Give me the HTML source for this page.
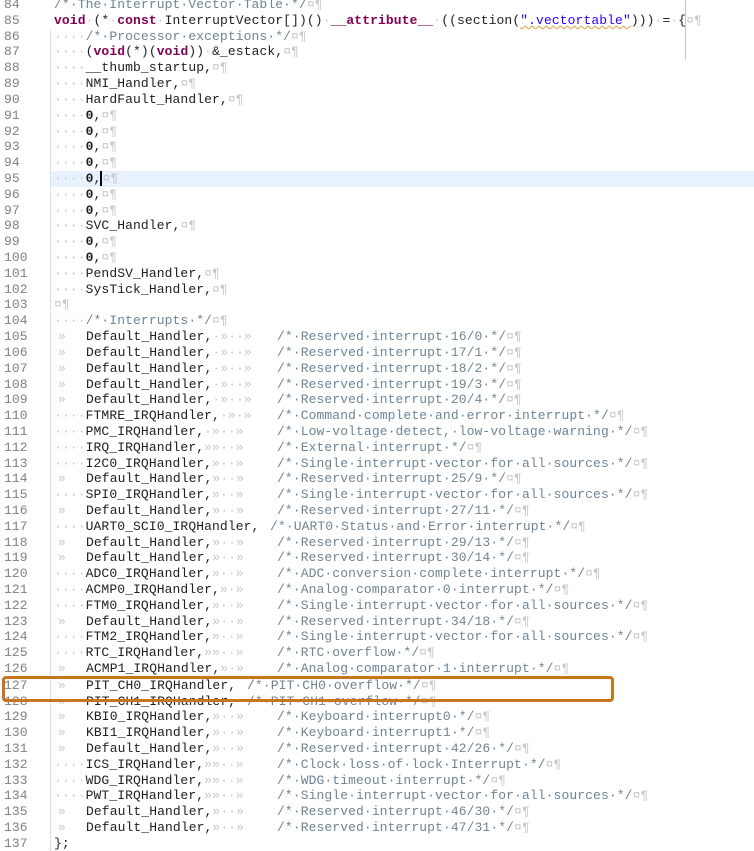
<!DOCTYPE html>
<html><head><meta charset="utf-8"><style>
html,body{margin:0;padding:0;background:#fff;width:754px;height:851px;overflow:hidden;position:relative}
.l{position:absolute;left:0;width:754px;height:16px;line-height:16px;font-family:"Liberation Mono",monospace;font-size:13px;letter-spacing:0.1px;white-space:pre;color:#1e1e1e}
.n{position:absolute;left:4px;color:#808080}
.c{position:absolute}
.w{color:#c8c8c8}
.k{color:#7f0055;font-weight:bold}
.m{color:#6f8494}
.s{color:#2a00ff;text-decoration:underline wavy #e0a040;text-decoration-thickness:1px}
.b{font-weight:bold}
.hl{background:#e8f2fe}
#gut{position:absolute;left:50px;top:30px;height:821px;border-left:1px dotted #b8c8d8}
#mar{position:absolute;left:685px;top:0;height:60px;border-left:1px solid #c8c8c8}
#box{position:absolute;left:2px;top:676px;width:606px;height:20px;border:3px solid #c8751e;border-radius:4px}
</style></head><body>
<div id="gut"></div><div id="mar"></div>
<div class="l" style="top:-3px"><span class="n">84</span><span class="c m" style="left:54px">/*·The·Interrupt·Vector·Table·*/<span class="w">¤¶</span></span></div>
<div class="l" style="top:13px"><span class="n">85</span><span class="c" style="left:54px"><span class="k">void</span><span class="w">·</span>(*<span class="w">·</span><span class="k">const</span><span class="w">·</span>InterruptVector[])()<span class="w">·</span><span class="k">__attribute__</span><span class="w">·</span>((section(<span class="s">".vectortable"</span>)))<span class="w">·</span>=<span class="w">·</span>{<span class="w">¤¶</span></span></div>
<div class="l" style="top:29px"><span class="n">86</span><span class="c" style="left:54px"><span class="w">····</span><span class="m">/*·Processor·exceptions·*/</span><span class="w">¤¶</span></span></div>
<div class="l" style="top:44px"><span class="n">87</span><span class="c" style="left:54px"><span class="w">····</span>(<span class="k">void</span>(*)(<span class="k">void</span>))<span class="w">·</span>&amp;_estack,<span class="w">¤¶</span></span></div>
<div class="l" style="top:60px"><span class="n">88</span><span class="c" style="left:54px"><span class="w">····</span>__thumb_startup,<span class="w">¤¶</span></span></div>
<div class="l" style="top:76px"><span class="n">89</span><span class="c" style="left:54px"><span class="w">····</span>NMI_Handler,<span class="w">¤¶</span></span></div>
<div class="l" style="top:92px"><span class="n">90</span><span class="c" style="left:54px"><span class="w">····</span>HardFault_Handler,<span class="w">¤¶</span></span></div>
<div class="l" style="top:108px"><span class="n">91</span><span class="c" style="left:54px"><span class="w">····</span><span class="b">0</span>,<span class="w">¤¶</span></span></div>
<div class="l" style="top:124px"><span class="n">92</span><span class="c" style="left:54px"><span class="w">····</span><span class="b">0</span>,<span class="w">¤¶</span></span></div>
<div class="l" style="top:139px"><span class="n">93</span><span class="c" style="left:54px"><span class="w">····</span><span class="b">0</span>,<span class="w">¤¶</span></span></div>
<div class="l" style="top:155px"><span class="n">94</span><span class="c" style="left:54px"><span class="w">····</span><span class="b">0</span>,<span class="w">¤¶</span></span></div>
<div class="l" style="top:171px"><div class="hl" style="position:absolute;left:51px;right:0;top:0;bottom:0"></div><span class="n">95</span><span class="c" style="left:54px"><span class="w">····</span><span class="b">0</span>,<span style="border-left:2px solid #000;margin-left:-1px"></span><span class="w">¤¶</span></span></div>
<div class="l" style="top:187px"><span class="n">96</span><span class="c" style="left:54px"><span class="w">····</span><span class="b">0</span>,<span class="w">¤¶</span></span></div>
<div class="l" style="top:203px"><span class="n">97</span><span class="c" style="left:54px"><span class="w">····</span><span class="b">0</span>,<span class="w">¤¶</span></span></div>
<div class="l" style="top:218px"><span class="n">98</span><span class="c" style="left:54px"><span class="w">····</span>SVC_Handler,<span class="w">¤¶</span></span></div>
<div class="l" style="top:234px"><span class="n">99</span><span class="c" style="left:54px"><span class="w">····</span><span class="b">0</span>,<span class="w">¤¶</span></span></div>
<div class="l" style="top:250px"><span class="n">100</span><span class="c" style="left:54px"><span class="w">····</span><span class="b">0</span>,<span class="w">¤¶</span></span></div>
<div class="l" style="top:266px"><span class="n">101</span><span class="c" style="left:54px"><span class="w">····</span>PendSV_Handler,<span class="w">¤¶</span></span></div>
<div class="l" style="top:282px"><span class="n">102</span><span class="c" style="left:54px"><span class="w">····</span>SysTick_Handler,<span class="w">¤¶</span></span></div>
<div class="l" style="top:297px"><span class="n">103</span><span class="c" style="left:54px"><span class="w">¤¶</span></span></div>
<div class="l" style="top:313px"><span class="n">104</span><span class="c" style="left:54px"><span class="w">····</span><span class="m">/*·Interrupts·*/</span><span class="w">¤¶</span></span></div>

<div class="l" style="top:329px"><span class="n">105</span><span class="c w" style="left:58px">»</span><span class="c" style="left:86px">Default_Handler,<span class="w">·»··»</span></span><span class="c m" style="left:277px">/*·Reserved·interrupt·16/0·*/<span class="w">¤¶</span></span></div>
<div class="l" style="top:345px"><span class="n">106</span><span class="c w" style="left:58px">»</span><span class="c" style="left:86px">Default_Handler,<span class="w">·»··»</span></span><span class="c m" style="left:277px">/*·Reserved·interrupt·17/1·*/<span class="w">¤¶</span></span></div>
<div class="l" style="top:361px"><span class="n">107</span><span class="c w" style="left:58px">»</span><span class="c" style="left:86px">Default_Handler,<span class="w">·»··»</span></span><span class="c m" style="left:277px">/*·Reserved·interrupt·18/2·*/<span class="w">¤¶</span></span></div>
<div class="l" style="top:377px"><span class="n">108</span><span class="c w" style="left:58px">»</span><span class="c" style="left:86px">Default_Handler,<span class="w">·»··»</span></span><span class="c m" style="left:277px">/*·Reserved·interrupt·19/3·*/<span class="w">¤¶</span></span></div>
<div class="l" style="top:392px"><span class="n">109</span><span class="c w" style="left:58px">»</span><span class="c" style="left:86px">Default_Handler,<span class="w">·»··»</span></span><span class="c m" style="left:277px">/*·Reserved·interrupt·20/4·*/<span class="w">¤¶</span></span></div>
<div class="l" style="top:408px"><span class="n">110</span><span class="c" style="left:54px"><span class="w">····</span>FTMRE_IRQHandler,<span class="w">·»·»</span></span><span class="c m" style="left:277px">/*·Command·complete·and·error·interrupt·*/<span class="w">¤¶</span></span></div>
<div class="l" style="top:424px"><span class="n">111</span><span class="c" style="left:54px"><span class="w">····</span>PMC_IRQHandler,<span class="w">·»··»</span></span><span class="c m" style="left:277px">/*·Low-voltage·detect,·low-voltage·warning·*/<span class="w">¤¶</span></span></div>
<div class="l" style="top:440px"><span class="n">112</span><span class="c" style="left:54px"><span class="w">····</span>IRQ_IRQHandler,<span class="w">»»··»</span></span><span class="c m" style="left:277px">/*·External·interrupt·*/<span class="w">¤¶</span></span></div>
<div class="l" style="top:456px"><span class="n">113</span><span class="c" style="left:54px"><span class="w">····</span>I2C0_IRQHandler,<span class="w">»··»</span></span><span class="c m" style="left:277px">/*·Single·interrupt·vector·for·all·sources·*/<span class="w">¤¶</span></span></div>
<div class="l" style="top:471px"><span class="n">114</span><span class="c w" style="left:58px">»</span><span class="c" style="left:86px">Default_Handler,<span class="w">»··»</span></span><span class="c m" style="left:277px">/*·Reserved·interrupt·25/9·*/<span class="w">¤¶</span></span></div>
<div class="l" style="top:487px"><span class="n">115</span><span class="c" style="left:54px"><span class="w">····</span>SPI0_IRQHandler,<span class="w">»··»</span></span><span class="c m" style="left:277px">/*·Single·interrupt·vector·for·all·sources·*/<span class="w">¤¶</span></span></div>
<div class="l" style="top:503px"><span class="n">116</span><span class="c w" style="left:58px">»</span><span class="c" style="left:86px">Default_Handler,<span class="w">»··»</span></span><span class="c m" style="left:277px">/*·Reserved·interrupt·27/11·*/<span class="w">¤¶</span></span></div>
<div class="l" style="top:519px"><span class="n">117</span><span class="c" style="left:54px"><span class="w">····</span>UART0_SCI0_IRQHandler,</span><span class="c m" style="left:270px">/*·UART0·Status·and·Error·interrupt·*/<span class="w">¤¶</span></span></div>
<div class="l" style="top:535px"><span class="n">118</span><span class="c w" style="left:58px">»</span><span class="c" style="left:86px">Default_Handler,<span class="w">»··»</span></span><span class="c m" style="left:277px">/*·Reserved·interrupt·29/13·*/<span class="w">¤¶</span></span></div>
<div class="l" style="top:550px"><span class="n">119</span><span class="c w" style="left:58px">»</span><span class="c" style="left:86px">Default_Handler,<span class="w">»··»</span></span><span class="c m" style="left:277px">/*·Reserved·interrupt·30/14·*/<span class="w">¤¶</span></span></div>
<div class="l" style="top:566px"><span class="n">120</span><span class="c" style="left:54px"><span class="w">····</span>ADC0_IRQHandler,<span class="w">»··»</span></span><span class="c m" style="left:277px">/*·ADC·conversion·complete·interrupt·*/<span class="w">¤¶</span></span></div>
<div class="l" style="top:582px"><span class="n">121</span><span class="c" style="left:54px"><span class="w">····</span>ACMP0_IRQHandler,<span class="w">»·»</span></span><span class="c m" style="left:277px">/*·Analog·comparator·0·interrupt·*/<span class="w">¤¶</span></span></div>
<div class="l" style="top:598px"><span class="n">122</span><span class="c" style="left:54px"><span class="w">····</span>FTM0_IRQHandler,<span class="w">»··»</span></span><span class="c m" style="left:277px">/*·Single·interrupt·vector·for·all·sources·*/<span class="w">¤¶</span></span></div>
<div class="l" style="top:614px"><span class="n">123</span><span class="c w" style="left:58px">»</span><span class="c" style="left:86px">Default_Handler,<span class="w">»··»</span></span><span class="c m" style="left:277px">/*·Reserved·interrupt·34/18·*/<span class="w">¤¶</span></span></div>
<div class="l" style="top:629px"><span class="n">124</span><span class="c" style="left:54px"><span class="w">····</span>FTM2_IRQHandler,<span class="w">»··»</span></span><span class="c m" style="left:277px">/*·Single·interrupt·vector·for·all·sources·*/<span class="w">¤¶</span></span></div>
<div class="l" style="top:645px"><span class="n">125</span><span class="c" style="left:54px"><span class="w">····</span>RTC_IRQHandler,<span class="w">»»··»</span></span><span class="c m" style="left:277px">/*·RTC·overflow·*/<span class="w">¤¶</span></span></div>
<div class="l" style="top:661px"><span class="n">126</span><span class="c w" style="left:58px">»</span><span class="c" style="left:86px">ACMP1_IRQHandler,<span class="w">»·»</span></span><span class="c m" style="left:277px">/*·Analog·comparator·1·interrupt·*/<span class="w">¤¶</span></span></div>
<div class="l" style="top:678px"><span class="n">127</span><span class="c w" style="left:58px">»</span><span class="c" style="left:86px">PIT_CH0_IRQHandler,</span><span class="c m" style="left:247px">/*·PIT·CH0·overflow·*/<span class="w">¤¶</span></span></div>
<div class="l" style="top:694px"><span class="n">128</span><span class="c w" style="left:58px">»</span><span class="c" style="left:86px">PIT_CH1_IRQHandler,</span><span class="c m" style="left:247px">/*·PIT·CH1·overflow·*/<span class="w">¤¶</span></span></div>
<div class="l" style="top:709px"><span class="n">129</span><span class="c w" style="left:58px">»</span><span class="c" style="left:86px">KBI0_IRQHandler,<span class="w">»··»</span></span><span class="c m" style="left:277px">/*·Keyboard·interrupt0·*/<span class="w">¤¶</span></span></div>
<div class="l" style="top:725px"><span class="n">130</span><span class="c w" style="left:58px">»</span><span class="c" style="left:86px">KBI1_IRQHandler,<span class="w">»··»</span></span><span class="c m" style="left:277px">/*·Keyboard·interrupt1·*/<span class="w">¤¶</span></span></div>
<div class="l" style="top:741px"><span class="n">131</span><span class="c w" style="left:58px">»</span><span class="c" style="left:86px">Default_Handler,<span class="w">»··»</span></span><span class="c m" style="left:277px">/*·Reserved·interrupt·42/26·*/<span class="w">¤¶</span></span></div>
<div class="l" style="top:757px"><span class="n">132</span><span class="c" style="left:54px"><span class="w">····</span>ICS_IRQHandler,<span class="w">»»··»</span></span><span class="c m" style="left:277px">/*·Clock·loss·of·lock·Interrupt·*/<span class="w">¤¶</span></span></div>
<div class="l" style="top:773px"><span class="n">133</span><span class="c" style="left:54px"><span class="w">····</span>WDG_IRQHandler,<span class="w">»»··»</span></span><span class="c m" style="left:277px">/*·WDG·timeout·interrupt·*/<span class="w">¤¶</span></span></div>
<div class="l" style="top:788px"><span class="n">134</span><span class="c" style="left:54px"><span class="w">····</span>PWT_IRQHandler,<span class="w">»»··»</span></span><span class="c m" style="left:277px">/*·Single·interrupt·vector·for·all·sources·*/<span class="w">¤¶</span></span></div>
<div class="l" style="top:804px"><span class="n">135</span><span class="c w" style="left:58px">»</span><span class="c" style="left:86px">Default_Handler,<span class="w">»··»</span></span><span class="c m" style="left:277px">/*·Reserved·interrupt·46/30·*/<span class="w">¤¶</span></span></div>
<div class="l" style="top:820px"><span class="n">136</span><span class="c w" style="left:58px">»</span><span class="c" style="left:86px">Default_Handler,<span class="w">»··»</span></span><span class="c m" style="left:277px">/*·Reserved·interrupt·47/31·*/<span class="w">¤¶</span></span></div>
<div class="l" style="top:836px"><span class="n">137</span><span class="c" style="left:54px">};</span></div>
<div id="box"></div>
</body></html>
